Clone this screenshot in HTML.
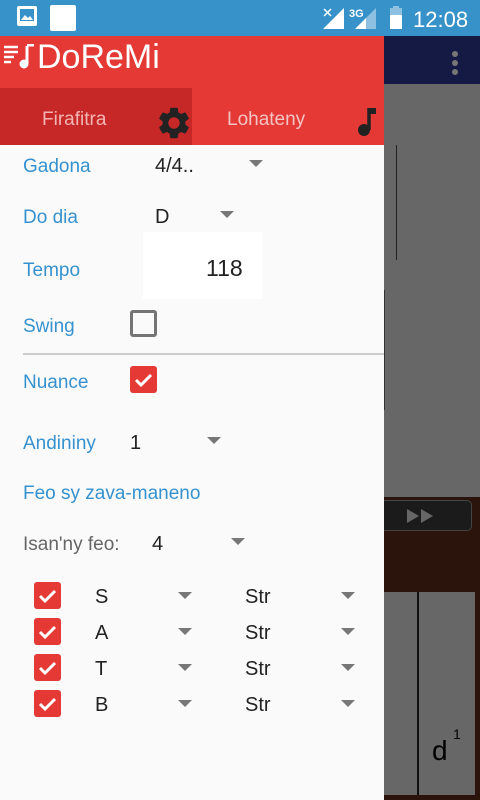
<!DOCTYPE html><html><head><style>
*{margin:0;padding:0;box-sizing:border-box}
body{width:480px;height:800px;position:relative;overflow:hidden;font-family:"Liberation Sans",sans-serif;background:#666}
.a{position:absolute}
.lb{position:absolute;color:#3592cf;font-size:19px}
.tx{position:absolute;color:#222;font-size:20px}
.tri{position:absolute;width:0;height:0;border-left:7px solid transparent;border-right:7px solid transparent;border-top:7px solid #777}
.cb{position:absolute;width:27px;height:27px;background:#e53935;border-radius:3px}
.cb svg{position:absolute;left:0;top:0}
</style></head><body>
<div class="a" style="left:0;top:0;width:480px;height:36px;background:#3792c9"></div>
<svg class="a" style="left:0;top:0" width="480" height="36">
<rect x="17" y="6" width="20" height="20" rx="2" fill="#fff"/><rect x="20" y="9" width="14" height="12" fill="#3792c9"/><path d="M21 20 L25 15 L28 18 L30 16 L33 20Z" fill="#fff"/>
<rect x="50" y="5" width="26" height="26" rx="2" fill="#fff"/>
<path d="M323 29 L344 29 L344 8Z" fill="#fff"/><path d="M324 9l7 7M331 9l-7 7" stroke="#fff" stroke-width="1.5"/>
<text x="349" y="17" fill="#fff" font-size="11" font-weight="bold" font-family="Liberation Sans">3G</text>
<path d="M355 29 L376 29 L376 8Z" fill="#8ec0e2"/><path d="M355 29 L366 29 L366 18Z" fill="#fff"/>
<rect x="390" y="8" width="12" height="21" fill="#fff"/><rect x="390" y="8" width="12" height="7" fill="#8ec0e2"/><rect x="393" y="6" width="6" height="3" fill="#8ec0e2"/>
<text x="413" y="27" fill="#fff" font-size="22" font-family="Liberation Sans">12:08</text>
</svg>
<div class="a" style="left:384px;top:36px;width:96px;height:48px;background:#141a44"></div>
<div class="a" style="left:452px;top:51px;width:6px;height:6px;border-radius:3px;background:#777"></div>
<div class="a" style="left:452px;top:60px;width:6px;height:6px;border-radius:3px;background:#777"></div>
<div class="a" style="left:452px;top:69px;width:6px;height:6px;border-radius:3px;background:#777"></div>
<div class="a" style="left:384px;top:84px;width:96px;height:413px;background:#676767"></div>
<div class="a" style="left:396px;top:145px;width:1px;height:115px;background:#222"></div>
<div class="a" style="left:384px;top:290px;width:1px;height:120px;background:#333"></div>
<div class="a" style="left:384px;top:497px;width:96px;height:95px;background:#2a140b"></div>
<div class="a" style="left:370px;top:500px;width:102px;height:31px;background:#1b1b1b;border-radius:5px;border:1px solid #444"></div>
<svg class="a" style="left:405px;top:507px" width="32" height="18"><path d="M2 2L14 9L2 16ZM16 2L28 9L16 16Z" fill="#666"/></svg>
<div class="a" style="left:384px;top:592px;width:96px;height:203px;background:#676767"></div>
<div class="a" style="left:417px;top:592px;width:1.5px;height:203px;background:#111"></div>
<div class="a" style="left:475px;top:592px;width:5px;height:208px;background:#2a140b"></div>
<div class="a" style="left:384px;top:795px;width:96px;height:5px;background:#2a140b"></div>
<div class="a" style="left:432px;top:735px;font-size:28px;color:#000">d</div>
<div class="a" style="left:453px;top:726px;font-size:14px;color:#000">1</div>
<!-- drawer -->
<div class="a" style="left:0;top:36px;width:384px;height:109px;background:#e53935"></div>
<div class="a" style="left:0;top:88px;width:192px;height:57px;background:#c62828"></div>
<svg class="a" style="left:4px;top:44px" width="30" height="26"><path d="M0 3h14M0 8h14M0 13h10M0 18h7" stroke="#fff" stroke-width="2.5"/><path d="M23 2v18" stroke="#fff" stroke-width="3"/><path d="M23 1h7" stroke="#fff" stroke-width="3"/><circle cx="20" cy="20" r="4.5" fill="#fff"/></svg>
<div class="a" style="left:37px;top:38px;color:#fff;font-size:34px">DoReMi</div>
<div class="a" style="left:42px;top:109px;color:#f3b5b3;font-size:19px">Firafitra</div>
<div class="a" style="left:227px;top:109px;color:#f3c4c3;font-size:19px">Lohateny</div>
<svg class="a" style="left:155px;top:104px" width="38" height="38" viewBox="0 0 24 24"><path fill="#222" d="M19.14 12.94c.04-.3.06-.61.06-.94 0-.32-.02-.64-.07-.94l2.03-1.58a.49.49 0 0 0 .12-.61l-1.920-3.32a.488.488 0 0 0-.59-.22l-2.39.96c-.5-.38-1.03-.7-1.62-.94l-.36-2.54a.484.484 0 0 0-.48-.41h-3.84c-.24 0-.43.17-.47.41l-.36 2.54c-.59.24-1.13.57-1.62.94l-2.39-.96c-.22-.08-.47 0-.59.22L2.740 8.87c-.12.21-.08.47.12.61l2.03 1.58c-.05.3-.09.63-.09.94s.02.64.07.94l-2.03 1.58a.49.49 0 0 0-.12.61l1.92 3.32c.12.22.37.29.59.22l2.39-.96c.5.38 1.03.7 1.62.94l.36 2.54c.05.24.24.41.48.41h3.84c.24 0 .44-.17.47-.41l.36-2.54c.59-.24 1.130-.56 1.62-.94l2.39.96c.22.08.47 0 .59-.22l1.92-3.32c.12-.22.07-.47-.12-.61l-2.01-1.58zM12 15.6c-1.98 0-3.6-1.62-3.6-3.6s1.62-3.6 3.6-3.6 3.6 1.62 3.6 3.6-1.62 3.6-3.6 3.6z"/></svg>
<svg class="a" style="left:355px;top:106px" width="22" height="30"><path d="M14 2v22" stroke="#222" stroke-width="3.5"/><path d="M14 2h7v6h-7z" fill="#222"/><circle cx="9" cy="24" r="6" fill="#222"/></svg>
<div class="a" style="left:0;top:145px;width:384px;height:655px;background:#fafafa"></div>
<div class="lb" style="left:23px;top:156px">Gadona</div>
<div class="tx" style="left:155px;top:155px">4/4..</div><div class="tri" style="left:249px;top:160px"></div>
<div class="lb" style="left:23px;top:207px">Do dia</div>
<div class="tx" style="left:155px;top:206px">D</div><div class="tri" style="left:220px;top:211px"></div>
<div class="lb" style="left:23px;top:260px">Tempo</div>
<div class="a" style="left:143px;top:232px;width:120px;height:67px;background:#fff"></div>
<div class="tx" style="left:206px;top:255px;font-size:23px">118</div>
<div class="lb" style="left:23px;top:316px">Swing</div>
<div class="a" style="left:130px;top:310px;width:27px;height:27px;border:3px solid #757575;border-radius:3px"></div>
<div class="a" style="left:23px;top:353px;width:361px;height:2px;background:#ccc"></div>
<div class="lb" style="left:23px;top:372px">Nuance</div>
<div class="cb" style="left:130px;top:366px"><svg width="27" height="27"><path d="M6 14l5 5 10-10" stroke="#fff" stroke-width="3" fill="none"/></svg></div>
<div class="lb" style="left:23px;top:433px">Andininy</div>
<div class="tx" style="left:130px;top:432px">1</div><div class="tri" style="left:207px;top:437px"></div>
<div class="lb" style="left:23px;top:483px">Feo sy zava-maneno</div>
<div class="a" style="left:23px;top:534px;color:#666;font-size:19px">Isan'ny feo:</div>
<div class="tx" style="left:152px;top:533px">4</div><div class="tri" style="left:231px;top:538px"></div>
<div class="cb" style="left:34px;top:582px"><svg width="27" height="27"><path d="M6 14l5 5 10-10" stroke="#fff" stroke-width="3" fill="none"/></svg></div>
<div class="tx" style="left:95px;top:586px">S</div><div class="tri" style="left:178px;top:592px"></div>
<div class="tx" style="left:245px;top:586px">Str</div><div class="tri" style="left:341px;top:592px"></div>
<div class="cb" style="left:34px;top:618px"><svg width="27" height="27"><path d="M6 14l5 5 10-10" stroke="#fff" stroke-width="3" fill="none"/></svg></div>
<div class="tx" style="left:95px;top:622px">A</div><div class="tri" style="left:178px;top:628px"></div>
<div class="tx" style="left:245px;top:622px">Str</div><div class="tri" style="left:341px;top:628px"></div>
<div class="cb" style="left:34px;top:654px"><svg width="27" height="27"><path d="M6 14l5 5 10-10" stroke="#fff" stroke-width="3" fill="none"/></svg></div>
<div class="tx" style="left:95px;top:658px">T</div><div class="tri" style="left:178px;top:664px"></div>
<div class="tx" style="left:245px;top:658px">Str</div><div class="tri" style="left:341px;top:664px"></div>
<div class="cb" style="left:34px;top:690px"><svg width="27" height="27"><path d="M6 14l5 5 10-10" stroke="#fff" stroke-width="3" fill="none"/></svg></div>
<div class="tx" style="left:95px;top:694px">B</div><div class="tri" style="left:178px;top:700px"></div>
<div class="tx" style="left:245px;top:694px">Str</div><div class="tri" style="left:341px;top:700px"></div>
</body></html>
